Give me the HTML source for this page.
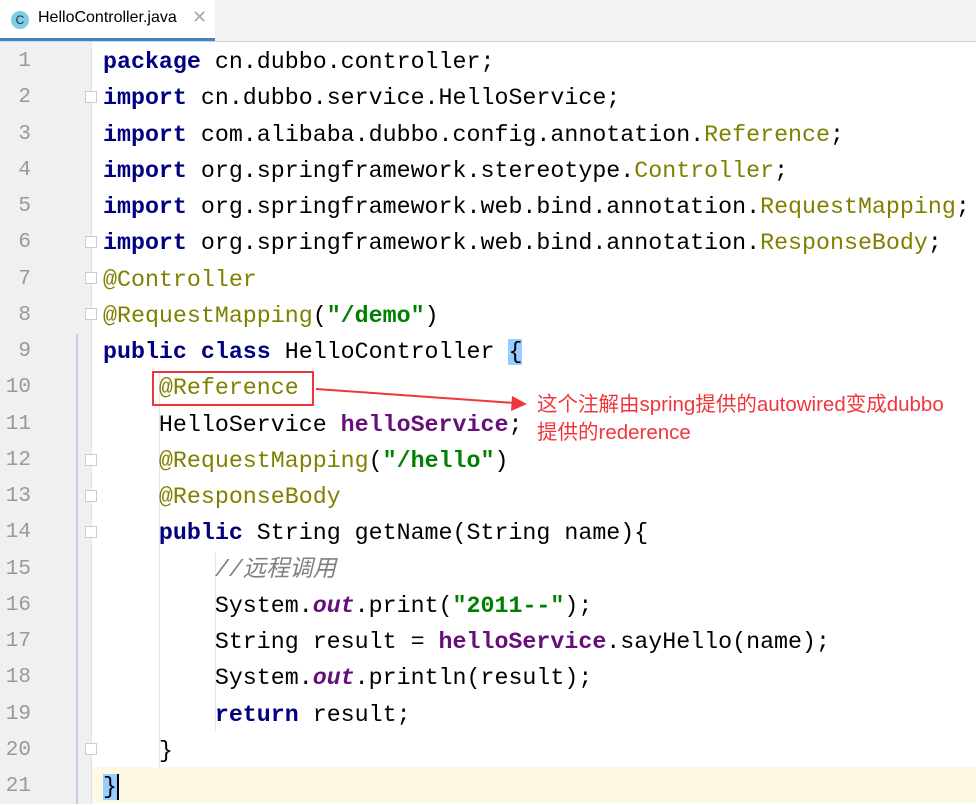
<!DOCTYPE html>
<html><head><meta charset="utf-8"><style>
body{margin:0;width:976px;height:804px;overflow:hidden;background:#fff;position:relative;font-family:"Liberation Mono",monospace}
.tabbar{position:absolute;left:0;top:0;width:976px;height:41px;background:#f2f2f2;border-bottom:1px solid #d4d4d4}
.tab{position:absolute;left:0;top:0;width:215px;height:38px;background:#fff;border-bottom:3px solid #4083c9}
.tab .ic{position:absolute;left:11px;top:11px;width:18px;height:18px;border-radius:50%;background:#7fcbe6;font:12px "Liberation Sans",sans-serif;color:#234;text-align:center;line-height:18px}
.tab .t{position:absolute;left:38px;top:9px;font:16px "Liberation Sans",sans-serif;color:#000}
.tab .x{position:absolute;left:192px;top:7px;font:18px "Liberation Sans",sans-serif;color:#aaa}
.gut{position:absolute;left:0;top:42px;width:91px;height:762px;background:#f0f0f0;border-right:1px solid #e2e2e2}
.scope{position:absolute;left:76px;top:334px;width:2px;height:470px;background:#c3cfe0}
.cur{position:absolute;left:92px;top:767px;width:884px;height:36px;background:#fdf9e5}
.nums{position:absolute;left:0;top:44px;width:31px;text-align:right;font-size:21px;line-height:36.25px;color:#999}
pre{position:absolute;left:103px;top:44px;margin:0;font-family:"Liberation Mono","Noto Sans CJK SC",monospace;font-size:23.3px;line-height:36.25px;color:#000}
.k{color:#000080;font-weight:bold}.a{color:#808000}.s{color:#008000;font-weight:bold}.f{color:#660e7a;font-weight:bold}.o{color:#660e7a;font-weight:bold;font-style:italic}.c{color:#808080;font-style:italic}
.guide{position:absolute;width:1px;background:#e6e6e6}
.fold{position:absolute;left:85px;width:12px;height:12px;border:1px solid #ccc;background:#fff;box-sizing:border-box}
.box{position:absolute;left:152px;top:371px;width:162px;height:35px;border:2px solid #f0363b;box-sizing:border-box}
.note{position:absolute;left:537px;top:391px;font:20.5px "Liberation Sans","Noto Sans CJK SC",sans-serif;color:#f0363b;line-height:28px;white-space:nowrap}
.brace{background:#99ccff}
</style></head><body>
<div class="tabbar"><div class="tab"><div class="ic">C</div><div class="t">HelloController.java</div><div class="x">✕</div></div></div>
<div class="gut"></div>
<div class="cur"></div>
<div class="scope"></div>
<div class="guide" style="left:159px;top:372px;height:395px"></div>
<div class="guide" style="left:215px;top:553px;height:178px"></div>
<div class="fold" style="top:91px"></div>
<div class="fold" style="top:236px"></div>
<div class="fold" style="top:272px"></div>
<div class="fold" style="top:308px"></div>
<div class="fold" style="top:454px"></div>
<div class="fold" style="top:490px"></div>
<div class="fold" style="top:526px"></div>
<div class="fold" style="top:743px"></div>
<div class="nums">1<br>2<br>3<br>4<br>5<br>6<br>7<br>8<br>9<br>10<br>11<br>12<br>13<br>14<br>15<br>16<br>17<br>18<br>19<br>20<br>21</div>
<pre><span class="k">package</span> cn.dubbo.controller;
<span class="k">import</span> cn.dubbo.service.HelloService;
<span class="k">import</span> com.alibaba.dubbo.config.annotation.<span class="a">Reference</span>;
<span class="k">import</span> org.springframework.stereotype.<span class="a">Controller</span>;
<span class="k">import</span> org.springframework.web.bind.annotation.<span class="a">RequestMapping</span>;
<span class="k">import</span> org.springframework.web.bind.annotation.<span class="a">ResponseBody</span>;
<span class="a">@Controller</span>
<span class="a">@RequestMapping</span>(<span class="s">"/demo"</span>)
<span class="k">public class</span> HelloController <span class="brace">{</span>
    <span class="a">@Reference</span>
    HelloService <span class="f">helloService</span>;
    <span class="a">@RequestMapping</span>(<span class="s">"/hello"</span>)
    <span class="a">@ResponseBody</span>
    <span class="k">public</span> String getName(String name){
        <span class="c">//远程调用</span>
        System.<span class="o">out</span>.print(<span class="s">"2011--"</span>);
        String result = <span class="f">helloService</span>.sayHello(name);
        System.<span class="o">out</span>.println(result);
        <span class="k">return</span> result;
    }
<span class="brace">}</span><span style="border-left:2px solid #000"></span></pre>
<div class="box"></div>
<svg style="position:absolute;left:0;top:0" width="976" height="804"><line x1="316" y1="389" x2="515" y2="403" stroke="#f0363b" stroke-width="2"/><polygon points="527,404 512,396 511,411" fill="#f0363b"/></svg>
<div class="note">这个注解由spring提供的autowired变成dubbo<br>提供的rederence</div>
</body></html>
